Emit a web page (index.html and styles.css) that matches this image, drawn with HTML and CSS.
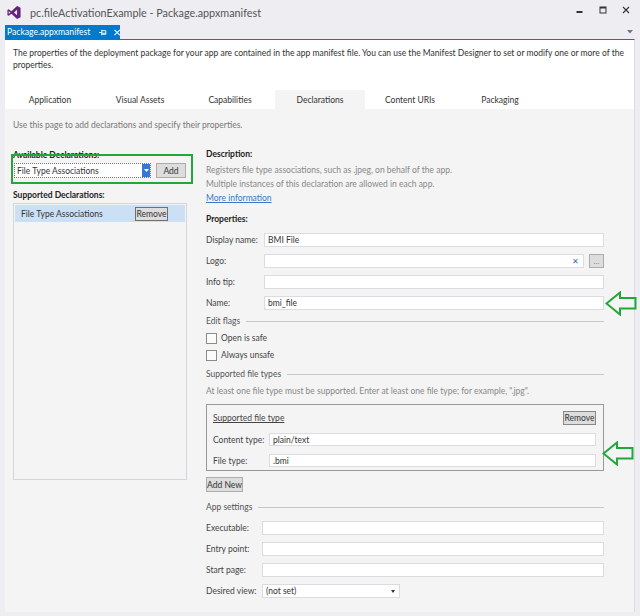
FILE: index.html
```html
<!DOCTYPE html>
<html>
<head>
<meta charset="utf-8">
<link rel="stylesheet" href="styles.css">
</head>
<body>
<div class="titlebar">
  <svg class="vslogo" viewBox="0 0 16 16"><path fill-rule="evenodd" fill="#68217a" d="M11.5 0.5 L15.5 2.5 V13.5 L11.5 15.5 L5 9.3 L2 11.8 L0.5 11 V5 L2 4.2 L5 6.7 Z M2 6.2 V9.8 L3.9 8 Z M11.5 4.8 L8 8 L11.5 11.2 Z"/></svg>
  <span class="title">pc.fileActivationExample - Package.appxmanifest</span>
  <div class="winctl">
    <span class="wbtn"><svg width="7" height="7" viewBox="0 0 7 7"><rect x="0.5" y="4" width="6" height="2" fill="#333"/></svg></span>
    <span class="wbtn"><svg width="8" height="8" viewBox="0 0 8 8"><rect x="1" y="1" width="6" height="6" fill="none" stroke="#333" stroke-width="1"/><rect x="1" y="1" width="6" height="1.5" fill="#333"/></svg></span>
    <span class="wbtn"><svg width="8" height="8" viewBox="0 0 8 8"><path d="M1 1 L7 7 M7 1 L1 7" stroke="#333" stroke-width="1.1"/></svg></span>
  </div>
</div>
<div class="tabstrip">
  <div class="doctab">
    <span class="doctab-name">Package.appxmanifest</span>
    <svg class="pin" width="9" height="7" viewBox="0 0 9 7"><path d="M0 3.5 H3 M3 0.5 V6.5 M3 1.5 H7.5 V5.5 H3 M3 4.3 H7.5" stroke="#fff" stroke-width="1" fill="none"/></svg>
    <svg class="tabx" width="7" height="7" viewBox="0 0 7 7"><path d="M0.5 0.5 L6.5 6.5 M6.5 0.5 L0.5 6.5" stroke="#fff" stroke-width="1.2"/></svg>
  </div>
  <svg class="tabmenu" width="6" height="4" viewBox="0 0 6 4"><path d="M0 0 H6 L3 3.5 Z" fill="#777"/></svg>
</div>
<div class="doc">
  <p class="intro">The properties of the deployment package for your app are contained in the app manifest file. You can use the Manifest Designer to set or modify one or more of the properties.</p>
  <div class="tabs">
    <div class="tab">Application</div>
    <div class="tab">Visual Assets</div>
    <div class="tab">Capabilities</div>
    <div class="tab active">Declarations</div>
    <div class="tab">Content URIs</div>
    <div class="tab">Packaging</div>
  </div>
  <div class="panel">
    <p class="hint">Use this page to add declarations and specify their properties.</p>
    <div class="cols">
      <div class="leftcol">
        <div class="bold avail">Available Declarations:</div>
        <div class="addrow">
          <div class="combo"><span>File Type Associations</span><span class="combo-btn"><svg width="5" height="3" viewBox="0 0 5 3"><path d="M0 0 H5 L2.5 3 Z" fill="#fff"/></svg></span></div>
          <div class="btn addbtn">Add</div>
        </div>
        <div class="bold supp">Supported Declarations:</div>
        <div class="list">
          <div class="item"><span>File Type Associations</span><span class="btn rmbtn">Remove</span></div>
        </div>
        <div class="greenbox"></div>
      </div>
      <div class="rightcol">
        <div class="bold">Description:</div>
        <div class="desc">Registers file type associations, such as .jpeg, on behalf of the app.</div>
        <div class="desc">Multiple instances of this declaration are allowed in each app.</div>
        <div class="desc"><span class="link">More information</span></div>
        <div class="bold props">Properties:</div>
        <div class="frow"><span class="lbl">Display name:</span><div class="input">BMI File</div></div>
        <div class="frow"><span class="lbl">Logo:</span><div class="input logo"><span class="clr">✕</span></div><div class="btn dots">...</div></div>
        <div class="frow"><span class="lbl">Info tip:</span><div class="input"></div></div>
        <div class="frow namerow"><span class="lbl">Name:</span><div class="input">bmi_file</div>
          <svg class="arrow a1" width="32" height="25" viewBox="0 0 32 25"><polygon points="1.5,12.5 15,1.5 15,7 30.5,7 30.5,17.5 15,17.5 15,23.5" fill="none" stroke="#21a83b" stroke-width="2"/></svg>
        </div>
        <div class="group g-edit">Edit flags</div>
        <div class="chk first"><span class="box"></span>Open is safe</div>
        <div class="chk"><span class="box"></span>Always unsafe</div>
        <div class="group g-types">Supported file types</div>
        <div class="desc hint2">At least one file type must be supported. Enter at least one file type; for example, ".jpg".</div>
        <div class="ftbox">
          <div class="fthead"><span class="ul">Supported file type</span><span class="btn rmbtn2">Remove</span></div>
          <div class="ftrow"><span class="lbl2">Content type:</span><div class="input">plain/text</div></div>
          <div class="ftrow"><span class="lbl2">File type:</span><div class="input">.bmi</div></div>
          <svg class="arrow a2" width="32" height="25" viewBox="0 0 32 25"><polygon points="1.5,12.5 15,1.5 15,7 30.5,7 30.5,17.5 15,17.5 15,23.5" fill="none" stroke="#21a83b" stroke-width="2"/></svg>
        </div>
        <div class="btn addnew">Add New</div>
        <div class="group g-app">App settings</div>
        <div class="frow first-app"><span class="lbl app">Executable:</span><div class="input"></div></div>
        <div class="frow"><span class="lbl app">Entry point:</span><div class="input"></div></div>
        <div class="frow"><span class="lbl app">Start page:</span><div class="input"></div></div>
        <div class="frow"><span class="lbl app">Desired view:</span><div class="input sel">(not set)<svg width="4" height="3" viewBox="0 0 4 3"><path d="M0 0 H4 L2 3 Z" fill="#333"/></svg></div></div>
      </div>
    </div>
  </div>
</div>
</body>
</html>
```
FILE: styles.css
```css
html, body {
  margin: 0;
  padding: 0;
}
body {
  width: 640px;
  height: 616px;
  overflow: hidden;
  background: #eeeef2;
  font-family: "Lato", "Noto Sans", sans-serif;
  font-size: 8.5px;
  color: #333;
  white-space: nowrap;
}
.titlebar {
  height: 25px;
  display: flex;
  align-items: center;
  padding-left: 7px;
}
.vslogo {
  width: 14px;
  height: 15px;
  margin-right: 9px;
}
.title {
  font-size: 10.8px;
  color: #555;
}
.winctl {
  margin-left: auto;
  display: flex;
  align-self: flex-start;
  padding-top: 5px;
  padding-right: 3px;
}
.wbtn {
  width: 23px;
  height: 10px;
  display: flex;
  justify-content: center;
  align-items: center;
}
.tabstrip {
  height: 14px;
  display: flex;
  align-items: center;
  padding-left: 5px;
}
.doctab {
  height: 14px;
  width: 115px;
  box-sizing: border-box;
  background: #007acc;
  color: #fff;
  display: flex;
  align-items: center;
  padding-left: 2px;
  font-size: 8.6px;
}
.pin {
  margin-left: 9px;
}
.tabx {
  margin-left: 6px;
}
.tabmenu {
  margin-left: auto;
  margin-right: 7px;
}
.doc {
  margin: 0 5px;
  height: 573px;
  box-sizing: border-box;
  background: #fff;
  border-top: 1px solid #007acc;
  border-right: 1px solid #dcdce2;
  display: flex;
  flex-direction: column;
}
.intro {
  margin: 0;
  padding: 7px 8px 0 8px;
  line-height: 12px;
  color: #333;
  white-space: normal;
}
.tabs {
  margin-top: 19px;
  height: 19px;
  display: flex;
}
.tab {
  width: 90px;
  display: flex;
  justify-content: center;
  align-items: center;
  color: #333;
}
.tab.active {
  background: #f4f4f4;
}
.panel {
  flex: 1;
  background: #f4f4f4;
  padding: 9px 0 0 8px;
}
.hint {
  margin: 0;
  line-height: 14px;
  color: #777;
}
.cols {
  margin-top: 15px;
  display: flex;
  gap: 19px;
}
.leftcol {
  width: 174px;
  position: relative;
}
.bold {
  font-weight: bold;
  line-height: 14px;
  color: #222;
}
.avail {
  position: relative;
  top: 1px;
}
.addrow {
  margin-top: 2px;
  display: flex;
  height: 15px;
}
.combo {
  margin-left: 1px;
  width: 137px;
  height: 15px;
  box-sizing: border-box;
  background: #fff;
  border: 1px dotted #777;
  display: flex;
  align-items: center;
  padding-left: 2px;
  color: #333;
}
.combo-btn {
  margin-left: auto;
  width: 8px;
  height: 13px;
  background: #3478d4;
  display: flex;
  align-items: center;
  justify-content: center;
}
.btn {
  background: #dddddd;
  border: 1px solid #acacac;
  box-sizing: border-box;
  color: #333;
  display: flex;
  align-items: center;
  justify-content: center;
}
.addbtn {
  margin-left: 5px;
  width: 30px;
  height: 15px;
}
.supp {
  margin-top: 10px;
}
.list {
  margin-top: 1px;
  height: 277px;
  box-sizing: border-box;
  border: 1px solid #d6d6da;
  padding: 1px;
}
.item {
  height: 17px;
  background: #cce0f5;
  display: flex;
  align-items: center;
  padding-left: 6px;
}
.rmbtn {
  margin-left: auto;
  margin-right: 17px;
  width: 33px;
  height: 14px;
  border-color: #707070;
}
.greenbox {
  position: absolute;
  left: -2px;
  top: 7px;
  width: 182px;
  height: 30px;
  box-sizing: border-box;
  border: 2px solid #21a83b;
}
.rightcol {
  width: 398px;
}
.desc {
  line-height: 14px;
  color: #888;
}
.bold + .desc {
  margin-top: 2px;
}
.link {
  color: #3a78c9;
  text-decoration: underline;
}
.props {
  margin-top: 7px;
}
.frow {
  margin-top: 7px;
  height: 14px;
  display: flex;
  align-items: center;
  position: relative;
}
.lbl {
  width: 58px;
  flex: none;
  color: #444;
}
.lbl.app {
  width: 56px;
}
.input {
  flex: 1;
  height: 14px;
  box-sizing: border-box;
  background: #fff;
  border: 1px solid #dcdce0;
  padding-left: 3px;
  display: flex;
  align-items: center;
  color: #333;
}
.logo {
  justify-content: flex-end;
  padding-right: 4px;
}
.clr {
  color: #2a6fc9;
  font-size: 8px;
}
.dots {
  margin-left: 5px;
  width: 15px;
  height: 14px;
  font-size: 8px;
  color: #c87a20;
}
.arrow {
  position: absolute;
}
.a1 {
  left: calc(100% + 1px);
  top: -5px;
}
.group {
  display: flex;
  align-items: center;
  line-height: 14px;
  color: #555;
}
.group::after {
  content: "";
  flex: 1;
  height: 1px;
  background: #c8c8c8;
  margin-left: 6px;
}
.g-edit {
  margin-top: 4px;
}
.chk {
  display: flex;
  align-items: center;
  height: 14px;
  margin-top: 3px;
  color: #444;
}
.box {
  width: 9px;
  height: 9px;
  border: 1px solid #8c8c8c;
  background: #fbfbfb;
  margin-right: 4px;
}
.g-types {
  margin-top: 5px;
}
.hint2 {
  margin-top: 3px;
}
.ftbox {
  margin-top: 6px;
  height: 67px;
  box-sizing: border-box;
  border: 1px solid #999;
  padding: 6px 7px 0 6px;
  position: relative;
}
.fthead {
  height: 14px;
  display: flex;
  align-items: center;
}
.ul {
  text-decoration: underline;
  color: #444;
}
.rmbtn2 {
  margin-left: auto;
  width: 33px;
  height: 14px;
  border-color: #888;
}
.ftrow {
  margin-top: 8px;
  height: 13px;
  display: flex;
  align-items: center;
}
.ftrow .input {
  height: 13px;
}
.lbl2 {
  width: 56px;
  flex: none;
  color: #444;
}
.a2 {
  left: calc(100% - 1px);
  top: 36px;
}
.addnew {
  margin-top: 6px;
  width: 37px;
  height: 15px;
}
.g-app {
  margin-top: 8px;
}
.first-app {
  margin-top: 7px;
}
.sel {
  flex: 0 0 138px;
  justify-content: space-between;
  padding-right: 4px;
}
```
